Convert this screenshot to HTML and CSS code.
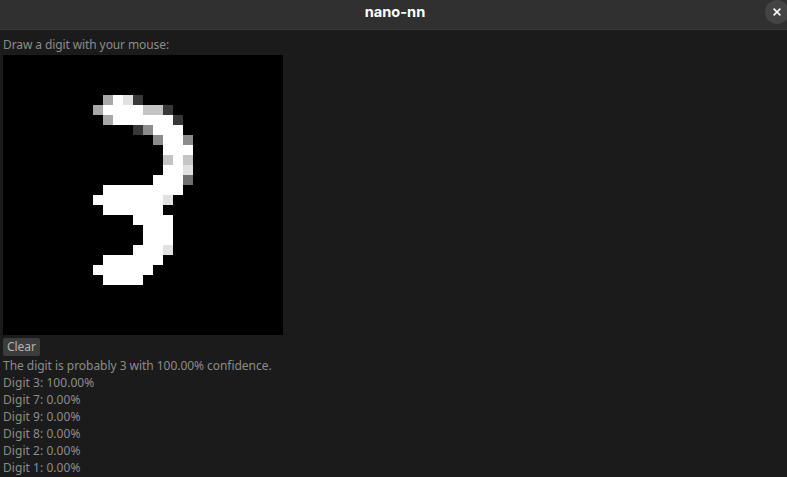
FILE: index.html
```html
<!DOCTYPE html>
<html lang="en">
<head>
<meta charset="utf-8">
<title>nano-nn</title>
<link rel="stylesheet" href="styles.css">
</head>
<body>
<header class="titlebar">
  <h1 class="title">nano-nn</h1>
  <button class="close" aria-label="Close"><svg width="8" height="8" viewBox="0 0 8 8"><path d="M.6 .6 7.4 7.4M7.4 .6 .6 7.4" stroke="#fff" stroke-width="1.5" fill="none"/></svg></button>
</header>
<main class="panel">
  <p class="line prompt">Draw a digit with your mouse:</p>
  <svg class="canvas" viewBox="0 0 28 28" shape-rendering="crispEdges">
    <path fill="#fff" d="M11 4h1v1h-1zM10 5h4v1h-4zM11 6h6v1h-6zM15 7h3v1h-3zM16 8h2v1h-2zM16 9h3v1h-3zM17 10h1v1h-1zM16 11h2v1h-2zM15 12h3v1h-3zM10 13h8v1h-8zM9 14h7v1h-7zM10 15h6v1h-6zM13 16h4v1h-4zM14 17h3v2h-3zM13 19h3v1h-3zM10 20h6v1h-6zM9 21h6v1h-6zM10 22h4v1h-4z"/>
    <path fill="#e1e1e1" d="M12 4h1v1h-1zM18 11h1v1h-1zM16 14h1v1h-1zM16 19h1v1h-1z"/>
    <path fill="#c4c4c4" d="M14 5h2v1h-2zM16 10h1v1h-1zM18 10h1v1h-1z"/>
    <path fill="#a8a8a8" d="M10 4h1v1h-1zM9 5h1v1h-1zM10 6h1v1h-1z"/>
    <path fill="#8c8c8c" d="M14 7h1v1h-1zM15 8h1v1h-1zM18 8h1v1h-1z"/>
    <path fill="#707070" d="M18 12h1v1h-1z"/>
    <path fill="#383838" d="M13 4h1v1h-1zM16 5h1v1h-1zM17 6h1v1h-1zM13 7h1v1h-1z"/>
  </svg>
  <button class="clear">Clear</button>
  <p class="line result">The digit is probably 3 with 100.00% confidence.</p>
  <p class="line score">Digit 3: 100.00%</p>
  <p class="line score">Digit 7: 0.00%</p>
  <p class="line score">Digit 9: 0.00%</p>
  <p class="line score">Digit 8: 0.00%</p>
  <p class="line score">Digit 2: 0.00%</p>
  <p class="line score">Digit 1: 0.00%</p>
</main>
</body>
</html>
```
FILE: styles.css
```css
* { box-sizing: border-box; }
body {
  margin: 0;
  height: 477px;
  overflow: hidden;
  background: #1b1b1b;
  color: #8c8c8c;
  font-family: "Noto Sans", sans-serif;
  font-size: 12px;
}
.titlebar {
  display: grid;
  grid-template-columns: 1fr auto 1fr;
  height: 30px;
  padding-bottom: 5px;
  align-items: center;
  background: #303030;
  border-bottom: 1px solid #393939;
}
.title {
  grid-column: 2;
  margin: 0 0 0 3px;
  color: #fff;
  font: bold 14.6px/24px Inter, sans-serif;
}
.close {
  justify-self: end;
  display: flex;
  align-items: center;
  justify-content: center;
  width: 24px;
  height: 24px;
  margin-right: -2px;
  padding: 0;
  border: 0;
  border-radius: 50%;
  background: #444;
}
.panel {
  display: flex;
  flex-direction: column;
  align-items: flex-start;
  padding: 6px 3px 0;
}
.line {
  margin: 0;
  height: 17px;
  line-height: 17px;
  white-space: nowrap;
}
.prompt {
  margin-bottom: 2px;
  letter-spacing: -0.1px;
}
.result { letter-spacing: -0.04px; }
.score { letter-spacing: 0.05px; }
.canvas {
  display: block;
  flex: none;
  width: 280px;
  height: 280px;
  background: #000;
}
.clear {
  width: 37px;
  height: 18px;
  margin: 3px 0 1px;
  padding: 0;
  border: 0;
  border-radius: 2px;
  background: #3c3c3c;
  color: #b4b4b4;
  font: 12px/18px "Noto Sans", sans-serif;
}
```
